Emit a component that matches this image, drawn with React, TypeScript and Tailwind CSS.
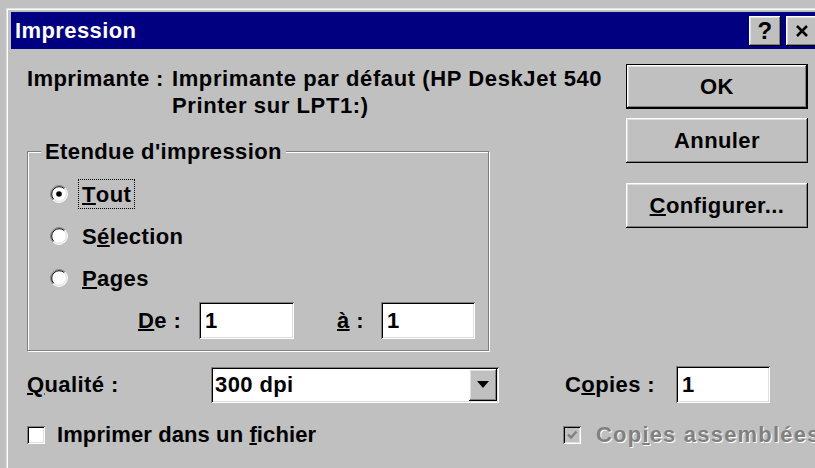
import type { ReactNode } from "react";

// Win95-style bevels
const raised =
  "shadow-[inset_-1px_-1px_0_#000,inset_1px_1px_0_#fff,inset_-2px_-2px_0_#808080,inset_2px_2px_0_#dfdfdf]";
const sunken =
  "shadow-[inset_1px_1px_0_#808080,inset_-1px_-1px_0_#fff,inset_2px_2px_0_#000,inset_-2px_-2px_0_#dfdfdf]";

function Radio({ checked }: { checked?: boolean }) {
  return (
    <svg width="18" height="18" viewBox="0 0 18 18" className="shrink-0">
      <circle cx="9" cy="9" r="8" fill="#fff" />
      <path d="M2.99 15.01A8.5 8.5 0 0 1 15.01 2.99" fill="none" stroke="#808080" />
      <path d="M15.01 2.99A8.5 8.5 0 0 1 2.99 15.01" fill="none" stroke="#fff" />
      <path d="M3.7 14.3A7.5 7.5 0 0 1 14.3 3.7" fill="none" stroke="#000" />
      <path d="M14.3 3.7A7.5 7.5 0 0 1 3.7 14.3" fill="none" stroke="#dfdfdf" />
      {checked ? <circle cx="9" cy="9" r="2.8" fill="#000" /> : null}
    </svg>
  );
}

function CheckBox({ checked, disabled }: { checked?: boolean; disabled?: boolean }) {
  return (
    <div
      className={`flex h-[18px] w-[18px] shrink-0 items-center justify-center ${sunken} ${
        disabled ? "bg-[#c0c0c0]" : "bg-white"
      }`}
    >
      {checked ? (
        <svg width="12" height="12" viewBox="0 0 12 12">
          <path
            d="M2 5.5 L5 8.5 L10.5 2.5"
            fill="none"
            stroke={disabled ? "#808080" : "#000"}
            strokeWidth="2.4"
          />
        </svg>
      ) : null}
    </div>
  );
}

function RadioRow({ checked, focused, children }: { checked?: boolean; focused?: boolean; children: ReactNode }) {
  return (
    <div className="flex h-[30px] items-center gap-[10px]">
      <Radio checked={checked} />
      <span
        className={`flex h-[30px] items-center border px-[3px] ${
          focused ? "border-dotted border-black" : "border-transparent"
        }`}
      >
        {children}
      </span>
    </div>
  );
}

function PushButton({ children, isDefault }: { children: ReactNode; isDefault?: boolean }) {
  return (
    <div
      className={`flex h-[45px] w-[182px] items-center justify-center bg-[#c0c0c0] ${raised} ${
        isDefault ? "border border-black" : ""
      }`}
    >
      {children}
    </div>
  );
}

function Field({ width, children }: { width: string; children?: ReactNode }) {
  return (
    <div className={`flex h-[37px] items-center bg-white pl-[6px] ${width} ${sunken}`}>{children}</div>
  );
}

export default function App() {
  return (
    <div className="h-[468px] w-[815px] overflow-hidden bg-[#c0c0c0] pl-[6px] pt-[8px] font-['Liberation_Sans',Arial,sans-serif] text-[22px] leading-[27px] font-bold tracking-[0.4px] text-black">
      <div className="w-[830px] border-l border-t border-[#dfdfdf]">
        <div className="h-[470px] border-l border-t border-white pl-[3px] pt-[2px]">
          {/* caption */}
          <div className="flex h-[37px] w-[810px] items-center justify-between bg-[#000080] pl-[4px] pr-[3px]">
            <span className="text-white">Impression</span>
            <div className="flex gap-[5px]">
              <div className={`flex h-[30px] w-[32px] items-center justify-center bg-[#c0c0c0] ${raised}`}>
                <span className="text-[24px] leading-none">?</span>
              </div>
              <div className={`flex h-[30px] w-[32px] items-center justify-center bg-[#c0c0c0] ${raised}`}>
                <svg width="14" height="12" viewBox="0 0 14 12">
                  <path d="M2 1 L12 11 M12 1 L2 11" stroke="#000" strokeWidth="2.6" />
                </svg>
              </div>
            </div>
          </div>

          <div className="pl-[16px] pt-[15px]">
            <div className="flex">
              <div className="w-[599px]">
                <div className="flex pt-[1px]">
                  <span className="w-[145px] shrink-0">Imprimante :</span>
                  <span className="w-[440px] tracking-[0.6px]">
                    Imprimante par défaut (HP DeskJet 540 Printer sur LPT1:)
                  </span>
                </div>

                <fieldset className="mt-[19px] w-[462px] border border-[#808080] pb-[11px] pl-[13px] pt-[14px] shadow-[inset_1px_1px_0_#fff,1px_1px_0_#fff]">
                  <legend className="bg-[#c0c0c0] px-[4px]">Etendue d'impression</legend>
                  <div className="flex flex-col gap-[12px] pl-[9px]">
                    <RadioRow checked focused>
                      <u className="decoration-2">T</u>out
                    </RadioRow>
                    <RadioRow>
                      S<u className="decoration-2">é</u>lection
                    </RadioRow>
                    <RadioRow>
                      <u className="decoration-2">P</u>ages
                    </RadioRow>
                  </div>
                  <div className="mt-[9px] flex items-center pl-[97px]">
                    <span className="w-[61px]">
                      <u className="decoration-2">D</u>e :
                    </span>
                    <Field width="w-[95px]">1</Field>
                    <span className="ml-[43px] w-[44px]">
                      <u className="decoration-2">à</u> :
                    </span>
                    <Field width="w-[94px]">1</Field>
                  </div>
                </fieldset>
              </div>

              <div className="flex flex-col">
                <PushButton isDefault>OK</PushButton>
                <div className="mt-[9px]">
                  <PushButton>Annuler</PushButton>
                </div>
                <div className="mt-[20px]">
                  <PushButton>
                    <span>
                      <u className="decoration-2">C</u>onfigurer...
                    </span>
                  </PushButton>
                </div>
              </div>
            </div>

            <div className="mt-[15px] flex items-center">
              <span className="w-[184px]">
                <u className="decoration-2">Q</u>ualité :
              </span>
              <div className={`flex h-[36px] w-[288px] items-center bg-white p-[2px] ${sunken}`}>
                <span className="flex-1 pl-[2px]">300 dpi</span>
                <div className={`flex h-[32px] w-[28px] items-center justify-center bg-[#c0c0c0] ${raised}`}>
                  <svg width="12" height="7" viewBox="0 0 12 7">
                    <path d="M0 0 H12 L6 7 Z" fill="#000" />
                  </svg>
                </div>
              </div>
              <span className="ml-[66px] w-[111px]">
                C<u className="decoration-2">o</u>pies :
              </span>
              <Field width="w-[94px]">1</Field>
            </div>

            <div className="mt-[18px] flex items-center">
              <div className="flex w-[536px] items-center gap-[12px]">
                <CheckBox />
                <span className="tracking-[0.1px]">
                  Imprimer dans un <u className="decoration-2">f</u>ichier
                </span>
              </div>
              <div className="flex items-center gap-[15px] whitespace-nowrap">
                <CheckBox checked disabled />
                <span className="tracking-[1.2px] text-[#808080] [text-shadow:1px_1px_0_#fff]">
                  Cop<u className="decoration-2">i</u>es assemblées
                </span>
              </div>
            </div>
          </div>
        </div>
      </div>
    </div>
  );
}
